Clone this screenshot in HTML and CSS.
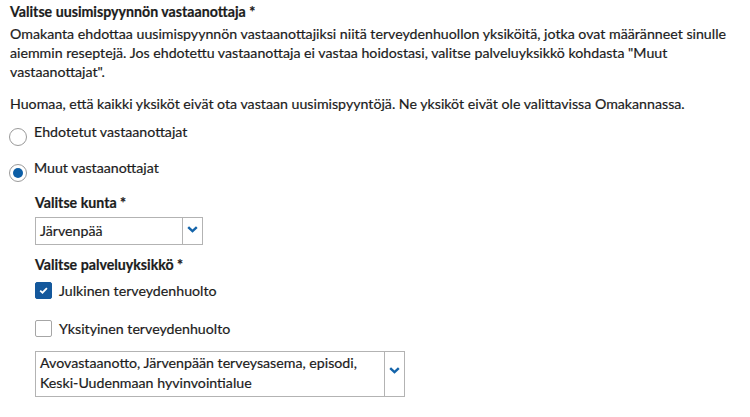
FILE: index.html
```html
<!DOCTYPE html>
<html lang="fi">
<head>
<meta charset="utf-8">
<link rel="stylesheet" href="styles.css">
</head>
<body>
<div class="page">
  <div class="title">Valitse uusimispyynnön vastaanottaja *</div>
  <p class="para">Omakanta ehdottaa uusimispyynnön vastaanottajiksi niitä terveydenhuollon yksiköitä, jotka ovat määränneet sinulle aiemmin reseptejä. Jos ehdotettu vastaanottaja ei vastaa hoidostasi, valitse palveluyksikkö kohdasta "Muut vastaanottajat".</p>
  <p class="para para2">Huomaa, että kaikki yksiköt eivät ota vastaan uusimispyyntöjä. Ne yksiköt eivät ole valittavissa Omakannassa.</p>

  <div class="radio-row first">
    <span class="radio"></span>
    <span class="rlabel">Ehdotetut vastaanottajat</span>
  </div>
  <div class="radio-row">
    <span class="radio checked"><span class="dot"></span></span>
    <span class="rlabel">Muut vastaanottajat</span>
  </div>

  <div class="sub">
    <div class="label kunta">Valitse kunta *</div>
    <div class="select small">
      <div class="value">Järvenpää</div>
      <div class="arrow">
        <svg width="11" height="7" viewBox="0 0 11 7"><polyline points="1.2,1.2 5.5,5.2 9.8,1.2" fill="none" stroke="#1464aa" stroke-width="2.4"/></svg>
      </div>
    </div>

    <div class="label yks">Valitse palveluyksikkö *</div>
    <div class="check-row first">
      <span class="box checked">
        <svg width="9" height="7" viewBox="0 0 9 7"><polyline points="1.2,3.6 3.5,5.7 7.9,1.2" fill="none" stroke="#ffffff" stroke-width="1.8"/></svg>
      </span>
      <span class="clabel">Julkinen terveydenhuolto</span>
    </div>
    <div class="check-row second">
      <span class="box"></span>
      <span class="clabel">Yksityinen terveydenhuolto</span>
    </div>

    <div class="select large">
      <div class="value">Avovastaanotto, Järvenpään terveysasema, episodi, Keski-Uudenmaan hyvinvointialue</div>
      <div class="arrow">
        <svg width="11" height="7" viewBox="0 0 11 7"><polyline points="1.2,1.2 5.5,5.2 9.8,1.2" fill="none" stroke="#1464aa" stroke-width="2.4"/></svg>
      </div>
    </div>
  </div>
</div>
</body>
</html>
```

FILE: styles.css
```css
html, body {
  margin: 0;
  padding: 0;
  background: #ffffff;
}
body {
  font-family: "Lato", "Noto Sans", sans-serif;
  font-size: 14.2px;
  color: #1c1c1c;
  -webkit-text-stroke: 0.2px #1c1c1c;
}
.page {
  padding: 1.5px 10px 0 10px;
  display: flex;
  flex-direction: column;
  align-items: flex-start;
}
.title {
  font-weight: 700;
  line-height: 19px;
}
.para {
  margin: 3px 0 0 0;
  line-height: 19px;
  width: 728px;
}
.para2 {
  margin-top: 13px;
}
.radio-row {
  display: flex;
  align-items: flex-start;
  gap: 7px;
  margin-left: -1px;
  margin-top: 11.5px;
  line-height: 19px;
}
.radio-row.first {
  margin-top: 9px;
}
.radio {
  width: 18px;
  height: 18px;
  box-sizing: border-box;
  border: 1px solid #9a9a9a;
  border-radius: 50%;
  margin-top: 6.5px;
  display: flex;
  align-items: center;
  justify-content: center;
  background: #fff;
}
.dot {
  width: 10px;
  height: 10px;
  border-radius: 50%;
  background: #0c5ea6;
}
.sub {
  margin-left: 25px;
  margin-top: 10.5px;
  display: flex;
  flex-direction: column;
  align-items: flex-start;
}
.label {
  font-weight: 700;
  line-height: 19px;
}
.select {
  display: flex;
  border: 1px solid #b3b3b3;
  box-sizing: border-box;
  background: #fff;
}
.select .value {
  flex: 1;
  padding: 0 6px 0 4px;
}
.select .arrow {
  border-left: 1px solid #b3b3b3;
  display: flex;
  align-items: center;
  justify-content: center;
}
.select.small {
  width: 168px;
  height: 28px;
  margin-top: 5.5px;
}
.select.small .value {
  line-height: 26px;
}
.select.small .arrow {
  width: 20px;
  padding-bottom: 4px;
  box-sizing: border-box;
}
.label.yks {
  margin-top: 9.5px;
}
.check-row {
  display: flex;
  align-items: center;
  gap: 7px;
  line-height: 19px;
}
.check-row.first {
  margin-top: 7px;
}
.check-row.second {
  margin-top: 19px;
}
.box {
  width: 17px;
  height: 17px;
  box-sizing: border-box;
  border: 1px solid #a6a6a6;
  border-radius: 2px;
  display: flex;
  align-items: center;
  justify-content: center;
  background: #fff;
}
.box.checked {
  background: #14589c;
  border-color: #14589c;
}
.select.large {
  width: 370px;
  height: 46px;
  margin-top: 13px;
}
.select.large .value {
  line-height: 20px;
  padding-top: 1.5px;
}
.select.large .arrow {
  width: 20px;
  padding-bottom: 6px;
  box-sizing: border-box;
}
```
